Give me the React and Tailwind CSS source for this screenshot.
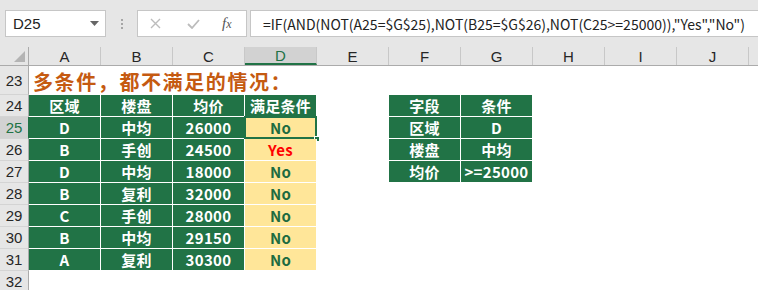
import React from "react";

const cols = ["A", "B", "C", "D", "E", "F", "G", "H", "I", "J"];

const data = [
  ["D", "中均", "26000", "No"],
  ["B", "手创", "24500", "Yes"],
  ["D", "中均", "18000", "No"],
  ["B", "复利", "32000", "No"],
  ["C", "手创", "28000", "No"],
  ["B", "中均", "29150", "No"],
  ["A", "复利", "30300", "No"],
];

const cond = [
  ["字段", "条件"],
  ["区域", "D"],
  ["楼盘", "中均"],
  ["均价", ">=25000"],
];

const grid = "grid grid-cols-[29px_repeat(10,72px)_1fr]";

function RowHead({ n, active }) {
  return (
    <div
      className={
        "flex items-center justify-center border-b border-r text-[15px] font-['Liberation_Sans',sans-serif] " +
        (active
          ? "bg-[#d2d2d2] border-b-[#d4d4d4] border-r-[#217346] text-[#217346]"
          : "bg-[#e6e6e6] border-b-[#d4d4d4] border-r-[#ababab] text-[#262626]")
      }
    >
      {n}
    </div>
  );
}

function Green({ children }) {
  return (
    <div className="flex items-center justify-center bg-[#217346] border-r border-b border-white text-white font-bold text-[15px] tracking-[0.3px]">
      {children}
    </div>
  );
}

function Yellow({ children, selected }) {
  return (
    <div className="relative flex items-center justify-center bg-[#ffe699] border-r border-b border-white font-bold text-[15px] tracking-[0.3px]">
      <span className={children === "Yes" ? "text-[#ff0000]" : "text-[#1e6b41]"}>{children}</span>
      {selected && (
        <>
          <div className="absolute -left-px -top-px -right-px -bottom-px border-2 border-[#217346]" />
          <div className="absolute -right-[4px] -bottom-[4px] w-[6px] h-[6px] bg-[#217346] border border-white" />
        </>
      )}
    </div>
  );
}

export default function App() {
  return (
    <div className="w-[758px] h-[290px] overflow-hidden bg-white font-['Noto_Sans_CJK_SC',sans-serif] leading-none">
      {/* formula bar */}
      <div className="h-[47px] bg-[#e6e6e6] flex items-start pt-[10px] pl-[5px]">
        <div className="w-[101px] h-[27px] bg-white border border-[#c6c6c6] flex items-center justify-between pl-[7px] pr-[6px]">
          <span className="text-[15px] text-[#222] font-['Liberation_Sans',sans-serif]">D25</span>
          <svg width="9" height="5" viewBox="0 0 9 5">
            <path d="M0 0h9L4.5 5z" fill="#666" />
          </svg>
        </div>
        <div className="w-[31px] h-[27px] flex flex-col items-center justify-center gap-[2px]">
          <div className="w-[2px] h-[2px] bg-[#a6a6a6]" />
          <div className="w-[2px] h-[2px] bg-[#a6a6a6]" />
          <div className="w-[2px] h-[2px] bg-[#a6a6a6]" />
        </div>
        <div className="w-[110px] h-[27px] bg-white border border-[#c6c6c6] flex items-center">
          <svg className="ml-[12px]" width="11" height="11" viewBox="0 0 11 11">
            <path d="M1 1l9 9M10 1l-9 9" stroke="#bcbcbc" strokeWidth="1.4" />
          </svg>
          <svg className="ml-[26px]" width="13" height="10" viewBox="0 0 13 10">
            <path d="M1 5l4 4 7-8" stroke="#bcbcbc" strokeWidth="1.8" fill="none" />
          </svg>
          <span className="ml-[22px] text-[15px] italic text-[#555] font-['Liberation_Serif',serif]">
            f<span className="text-[12px]">x</span>
          </span>
        </div>
        <div className="ml-[3px] flex-1 h-[27px] bg-white border border-[#c6c6c6] border-r-0 flex items-center pl-[12px] text-[14px] text-[#222] whitespace-nowrap">
          =IF(AND(NOT(A25=$G$25),NOT(B25=$G$26),NOT(C25&gt;=25000)),"Yes","No")
        </div>
      </div>

      {/* column headers */}
      <div className={grid + " h-[19px] bg-[#e6e6e6] border-b border-[#ababab]"}>
        <div className="relative border-r border-[#ababab]">
          <svg className="absolute right-[3px] bottom-[3px]" width="11" height="11" viewBox="0 0 11 11">
            <path d="M11 0V11H0z" fill="#b4b4b4" />
          </svg>
        </div>
        {cols.map((c) => (
          <div
            key={c}
            className={
              "flex items-center justify-center text-[15px] font-['Liberation_Sans',sans-serif] border-r border-[#c8c8c8] " +
              (c === "D" ? "bg-[#d2d2d2] text-[#217346] border-b-2 border-b-[#217346]" : "text-[#262626]")
            }
          >
            {c}
          </div>
        ))}
        <div />
      </div>

      {/* row 23 */}
      <div className={grid + " h-[29px]"}>
        <RowHead n={23} />
        <div className="col-span-11 flex items-end pl-[4px] pb-[3px] text-[20px] font-bold text-[#c55a11] whitespace-nowrap tracking-[1.6px]">
          多条件，都不满足的情况：
        </div>
      </div>

      {/* row 24 header */}
      <div className={grid + " h-[22px]"}>
        <RowHead n={24} />
        <Green>区域</Green>
        <Green>楼盘</Green>
        <Green>均价</Green>
        <Green>满足条件</Green>
        <div />
        <Green>{cond[0][0]}</Green>
        <Green>{cond[0][1]}</Green>
        <div />
      </div>

      {data.map((r, i) => {
        const n = 25 + i;
        const c = cond[i + 1];
        return (
          <div key={n} className={grid + " h-[22px]"}>
            <RowHead n={n} active={n === 25} />
            <Green>{r[0]}</Green>
            <Green>{r[1]}</Green>
            <Green>{r[2]}</Green>
            <Yellow selected={n === 25}>{r[3]}</Yellow>
            <div />
            {c ? (
              <>
                <Green>{c[0]}</Green>
                <Green>{c[1]}</Green>
              </>
            ) : (
              <>
                <div />
                <div />
              </>
            )}
            <div />
          </div>
        );
      })}

      {/* row 32 */}
      <div className={grid + " h-[22px]"}>
        <RowHead n={32} />
      </div>
    </div>
  );
}
